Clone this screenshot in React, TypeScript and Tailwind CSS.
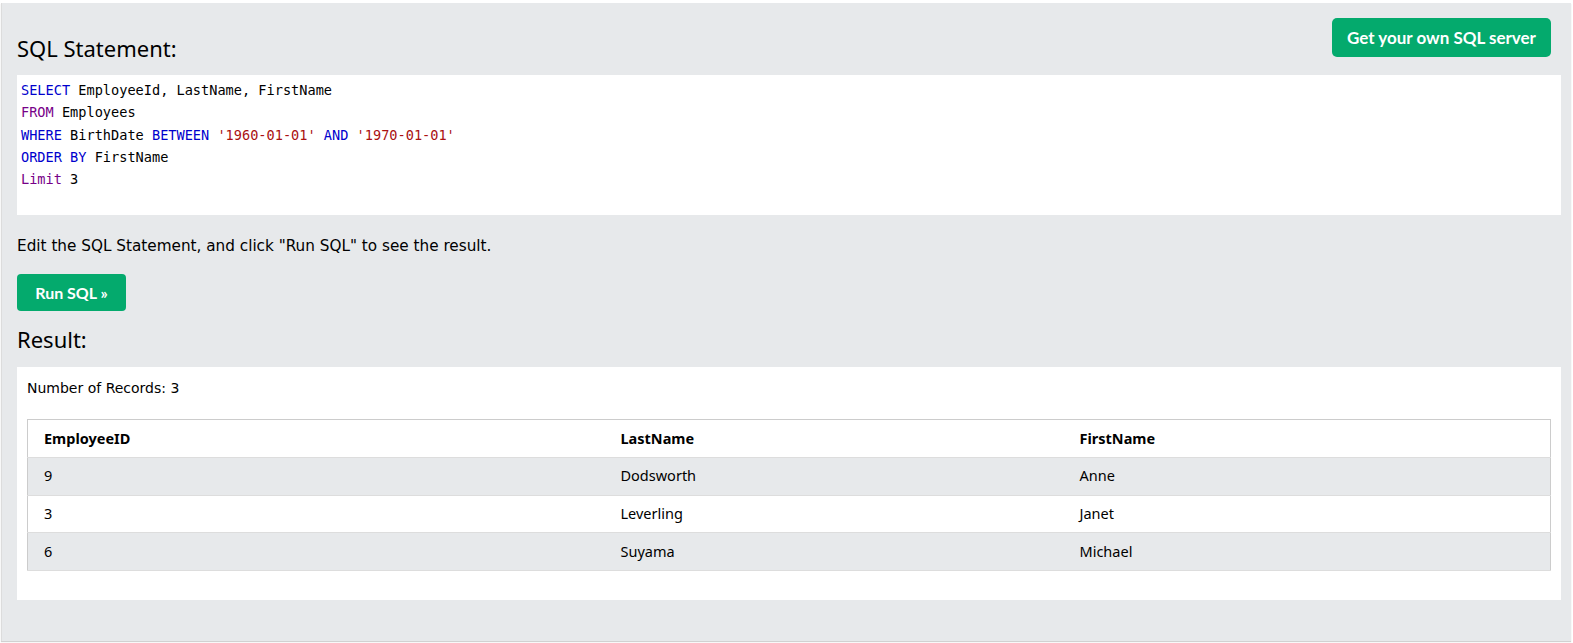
import React from 'react'

const rows = [
  { id: '9', last: 'Dodsworth', first: 'Anne' },
  { id: '3', last: 'Leverling', first: 'Janet' },
  { id: '6', last: 'Suyama', first: 'Michael' },
]

const kw = 'text-[#0000cd]'
const kw2 = 'text-[#770088]'
const str = 'text-[#aa1111]'

function App() {
  return (
    <div className="min-h-screen bg-white pt-[3px] pl-px pr-[2px]">
      <div className="h-[638px] bg-[#e7e9eb] border-l border-[#dcdcdc] shadow-[0_1px_1px_rgba(0,0,0,0.18)] pl-[15px] pr-[10px] pt-[15px] font-['DejaVu_Sans',sans-serif] text-black">
        {/* Header */}
        <div className="flex items-start justify-between">
          <h2 className="mt-[16px] text-[22px] leading-[28px] font-['Noto_Sans',sans-serif] font-normal">
            SQL Statement:
          </h2>
          <button className="mr-[10px] h-[39px] w-[219px] rounded-[5px] bg-[#04aa6d] font-['Lato',sans-serif] text-[17px] font-bold text-white">
            Get your own SQL server
          </button>
        </div>

        {/* Code */}
        <div className="mt-[13px] h-[140px] bg-white pl-1 pt-[4px] font-['DejaVu_Sans_Mono',monospace] text-[13.6px] leading-[22.3px] whitespace-pre">
          <div><span className={kw}>SELECT</span> EmployeeId, LastName, FirstName</div>
          <div><span className={kw2}>FROM</span> Employees</div>
          <div>
            <span className={kw}>WHERE</span> BirthDate <span className={kw}>BETWEEN</span>{' '}
            <span className={str}>'1960-01-01'</span> <span className={kw}>AND</span>{' '}
            <span className={str}>'1970-01-01'</span>
          </div>
          <div><span className={kw}>ORDER BY</span> FirstName</div>
          <div><span className={kw2}>Limit</span> 3</div>
        </div>

        <p className="mt-[21px] text-[15.25px] leading-[20px]">
          Edit the SQL Statement, and click "Run SQL" to see the result.
        </p>

        <button className="mt-[18px] h-[37px] w-[109px] rounded-[4px] bg-[#04aa6d] font-['Lato',sans-serif] text-[16px] font-bold text-white">
          Run SQL »
        </button>

        <h2 className="mt-[14px] text-[22px] leading-[28px] font-['Noto_Sans',sans-serif] font-normal">
          Result:
        </h2>

        {/* Result */}
        <div className="mt-[14px] h-[233px] bg-white px-[10px] pt-[11px]">
          <div className="text-[14px] leading-[20px]">Number of Records: 3</div>
          <table className="mt-[21px] w-full border border-[#cccccc] border-collapse font-['Noto_Sans',sans-serif] text-[14.5px]">
            <thead>
              <tr className="h-[38px] border-b border-[#dddddd] bg-white text-left">
                <th className="w-[577px] pl-4 font-bold">EmployeeID</th>
                <th className="w-[459px] pl-4 font-bold">LastName</th>
                <th className="pl-4 font-bold">FirstName</th>
              </tr>
            </thead>
            <tbody>
              {rows.map((r, i) => (
                <tr
                  key={r.id}
                  className={`h-[37.7px] border-b border-[#dddddd] ${i % 2 === 0 ? 'bg-[#e7e9eb]' : 'bg-white'}`}
                >
                  <td className="pl-4">{r.id}</td>
                  <td className="pl-4">{r.last}</td>
                  <td className="pl-4">{r.first}</td>
                </tr>
              ))}
            </tbody>
          </table>
        </div>
      </div>
    </div>
  )
}

export default App
